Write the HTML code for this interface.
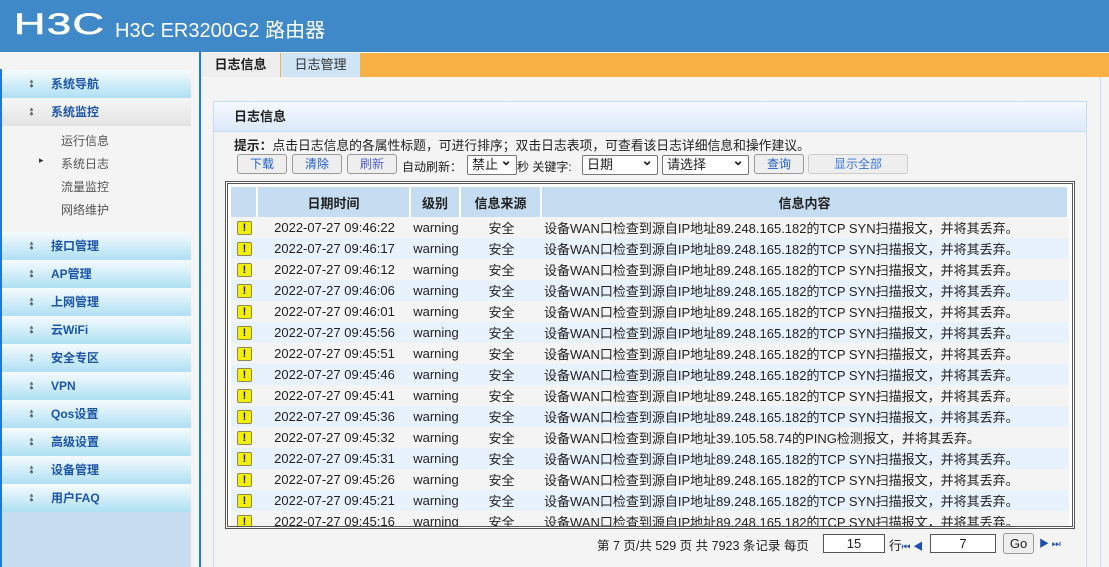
<!DOCTYPE html><html><head><meta charset="utf-8"><style>
*{margin:0;padding:0;box-sizing:border-box}
body{width:1109px;height:567px;overflow:hidden;background:#f4f4f4;font-family:"Liberation Sans","Noto Sans CJK SC",sans-serif;font-size:12px;color:#222;position:relative}
.hd{position:absolute;left:0;top:0;width:1109px;height:52px;background:#3f89c9;color:#fff}
.logo{position:absolute;left:14px;top:8px;font:normal 30px "Liberation Sans",sans-serif;letter-spacing:1px;transform:scaleX(1.45);transform-origin:left;-webkit-text-stroke:0.6px #fff}
.ttl{position:absolute;left:115px;top:14px;font-size:20px}
.side{position:absolute;left:0;top:52px;width:201px;height:515px;background:#f4f4f4;border-right:2px solid #1f78e0}
.sl{position:absolute;left:0;top:17px;width:2px;height:498px;background:#1f78e0}
.it{position:absolute;left:2px;width:189px;height:28px;background:linear-gradient(#f6fbfe,#aee0f4);color:#1c55a8;font-weight:bold;font-size:12px;line-height:28px;padding-left:49px}
.it.g{background:linear-gradient(#f6f6f6,#e3e3e3)}
.it:before{content:"⁑";position:absolute;left:25px;color:#333;font-size:9px}
.sub{position:absolute;left:61px;font-size:12px;color:#555}
.tabs{position:absolute;left:201px;top:53px;width:908px;height:24px;background:#f9b146}
.tab{position:absolute;top:0;height:24px;line-height:24px;font-size:13px;text-align:center}
.panel{position:absolute;left:213px;top:101px;width:874px;height:466px;border:1px solid #c6dcf0;border-bottom:none}
.ph{height:30px;background:linear-gradient(#f6f9ff,#dbe9fa);border-bottom:1px solid #c6dcf0;font-weight:bold;font-size:13px;line-height:30px;padding-left:20px}
.btn{position:absolute;top:154px;height:20px;border:1px solid #999;border-radius:3px;background:#eee;color:#1e5fcf;text-align:center;line-height:18px;font-size:12px}
.sel{position:absolute;top:155px;height:20px;border:1px solid #777;border-radius:2px;background:#fff;font-size:13px;line-height:18px;padding-left:4px}
.sel:after{content:"⌄";position:absolute;right:4px;top:-5px;font-weight:bold;font-size:14px}
.tbox{position:absolute;left:225px;top:181px;width:850px;height:348px;border:3px double #555;background:#fff;overflow:hidden}
table{position:absolute;left:3px;top:3px;border-collapse:separate;border-spacing:0;width:838px}
th{background:#c6dcf0;height:30px;font-size:13px;border-right:2px solid #fff}
td{height:21px;font-size:13px;text-align:center;white-space:nowrap;color:#222}
td.c{text-align:left;padding-left:2px}
tr:nth-child(odd) td{background:#e8f2fd}
tr:nth-child(even) td{background:#f4f4f4}
.w{display:inline-block;width:15px;height:14px;background:#f5f000;border:1px solid #8a8a50;font-size:11px;font-weight:bold;line-height:12px;vertical-align:middle;border-radius:2px}
.pg{position:absolute;top:535px;font-size:12.5px}
.in{position:absolute;top:534px;height:19px;border:1px solid #555;background:#fff;text-align:center;font-size:13px;line-height:17px}
</style></head><body>
<div class="hd"><div class="logo">H3C</div><div class="ttl">H3C ER3200G2 路由器</div></div>
<div class="side"><div class="sl"></div>
<div class="it" style="top:18px">系统导航</div>
<div class="it g" style="top:46px">系统监控</div>
<div class="sub" style="top:80px">运行信息</div>
<div class="sub" style="top:103px"><span style="position:absolute;left:-22px;font-size:9px;color:#333">▸</span>系统日志</div>
<div class="sub" style="top:126px">流量监控</div>
<div class="sub" style="top:149px">网络维护</div>
<div class="it" style="top:180px">接口管理</div>
<div class="it" style="top:208px">AP管理</div>
<div class="it" style="top:236px">上网管理</div>
<div class="it" style="top:264px">云WiFi</div>
<div class="it" style="top:292px">安全专区</div>
<div class="it" style="top:320px">VPN</div>
<div class="it" style="top:348px">Qos设置</div>
<div class="it" style="top:376px">高级设置</div>
<div class="it" style="top:404px">设备管理</div>
<div class="it" style="top:432px">用户FAQ</div>
<div style="position:absolute;left:2px;top:460px;width:189px;height:55px;background:#c8dcef"></div>
</div>
<div class="tabs"><div class="tab" style="left:0;width:79px;background:#eee;font-weight:bold">日志信息</div><div class="tab" style="left:80px;width:79px;background:#cfe4f4;color:#333">日志管理</div></div>
<div style="position:absolute;left:1100px;top:77px;width:1px;height:490px;background:#c6dcf0"></div>
<div class="panel"><div class="ph">日志信息</div></div>
<div style="position:absolute;left:234px;top:135px;font-size:12.8px"><b>提示：</b>点击日志信息的各属性标题，可进行排序；双击日志表项，可查看该日志详细信息和操作建议。</div>
<div class="btn" style="left:237px;width:50px">下载</div>
<div class="btn" style="left:292px;width:50px">清除</div>
<div class="btn" style="left:347px;width:50px;color:#5060e0">刷新</div>
<div style="position:absolute;left:402px;top:158px">自动刷新：</div>
<div class="sel" style="left:467px;width:50px">禁止</div>
<div style="position:absolute;left:517px;top:158px">秒 关键字:</div>
<div class="sel" style="left:582px;width:76px">日期</div>
<div class="sel" style="left:662px;width:87px">请选择</div>
<div class="btn" style="left:754px;width:50px">查询</div>
<div class="btn" style="left:808px;width:100px;border-color:#ccc;color:#3a78d8">显示全部</div>
<div class="tbox"><table>
<tr><th style="width:27px"></th><th style="width:153px">日期时间</th><th style="width:50px">级别</th><th style="width:81px">信息来源</th><th>信息内容</th></tr>
<tr><td><span class="w">!</span></td><td>2022-07-27 09:46:22</td><td>warning</td><td>安全</td><td class="c">设备WAN口检查到源自IP地址89.248.165.182的TCP SYN扫描报文，并将其丢弃。</td></tr>
<tr><td><span class="w">!</span></td><td>2022-07-27 09:46:17</td><td>warning</td><td>安全</td><td class="c">设备WAN口检查到源自IP地址89.248.165.182的TCP SYN扫描报文，并将其丢弃。</td></tr>
<tr><td><span class="w">!</span></td><td>2022-07-27 09:46:12</td><td>warning</td><td>安全</td><td class="c">设备WAN口检查到源自IP地址89.248.165.182的TCP SYN扫描报文，并将其丢弃。</td></tr>
<tr><td><span class="w">!</span></td><td>2022-07-27 09:46:06</td><td>warning</td><td>安全</td><td class="c">设备WAN口检查到源自IP地址89.248.165.182的TCP SYN扫描报文，并将其丢弃。</td></tr>
<tr><td><span class="w">!</span></td><td>2022-07-27 09:46:01</td><td>warning</td><td>安全</td><td class="c">设备WAN口检查到源自IP地址89.248.165.182的TCP SYN扫描报文，并将其丢弃。</td></tr>
<tr><td><span class="w">!</span></td><td>2022-07-27 09:45:56</td><td>warning</td><td>安全</td><td class="c">设备WAN口检查到源自IP地址89.248.165.182的TCP SYN扫描报文，并将其丢弃。</td></tr>
<tr><td><span class="w">!</span></td><td>2022-07-27 09:45:51</td><td>warning</td><td>安全</td><td class="c">设备WAN口检查到源自IP地址89.248.165.182的TCP SYN扫描报文，并将其丢弃。</td></tr>
<tr><td><span class="w">!</span></td><td>2022-07-27 09:45:46</td><td>warning</td><td>安全</td><td class="c">设备WAN口检查到源自IP地址89.248.165.182的TCP SYN扫描报文，并将其丢弃。</td></tr>
<tr><td><span class="w">!</span></td><td>2022-07-27 09:45:41</td><td>warning</td><td>安全</td><td class="c">设备WAN口检查到源自IP地址89.248.165.182的TCP SYN扫描报文，并将其丢弃。</td></tr>
<tr><td><span class="w">!</span></td><td>2022-07-27 09:45:36</td><td>warning</td><td>安全</td><td class="c">设备WAN口检查到源自IP地址89.248.165.182的TCP SYN扫描报文，并将其丢弃。</td></tr>
<tr><td><span class="w">!</span></td><td>2022-07-27 09:45:32</td><td>warning</td><td>安全</td><td class="c">设备WAN口检查到源自IP地址39.105.58.74的PING检测报文，并将其丢弃。</td></tr>
<tr><td><span class="w">!</span></td><td>2022-07-27 09:45:31</td><td>warning</td><td>安全</td><td class="c">设备WAN口检查到源自IP地址89.248.165.182的TCP SYN扫描报文，并将其丢弃。</td></tr>
<tr><td><span class="w">!</span></td><td>2022-07-27 09:45:26</td><td>warning</td><td>安全</td><td class="c">设备WAN口检查到源自IP地址89.248.165.182的TCP SYN扫描报文，并将其丢弃。</td></tr>
<tr><td><span class="w">!</span></td><td>2022-07-27 09:45:21</td><td>warning</td><td>安全</td><td class="c">设备WAN口检查到源自IP地址89.248.165.182的TCP SYN扫描报文，并将其丢弃。</td></tr>
<tr><td><span class="w">!</span></td><td>2022-07-27 09:45:16</td><td>warning</td><td>安全</td><td class="c">设备WAN口检查到源自IP地址89.248.165.182的TCP SYN扫描报文，并将其丢弃。</td></tr>
</table></div>
<div class="pg" style="left:597px">第 7 页/共 529 页 共 7923 条记录 每页</div>
<div class="in" style="left:823px;width:62px">15</div>
<div class="pg" style="left:889px">行<span style="color:#1e4fb0;font-size:10px">⏮ ◀</span></div>
<div class="in" style="left:930px;width:66px">7</div>
<div style="position:absolute;left:1003px;top:533px;width:31px;height:21px;border:1px solid #999;border-radius:3px;background:#eee;text-align:center;line-height:19px;font-size:13px">Go</div>
<div class="pg" style="left:1039px;color:#1e4fb0;font-size:10px">▶ ⏭</div>
</body></html>
